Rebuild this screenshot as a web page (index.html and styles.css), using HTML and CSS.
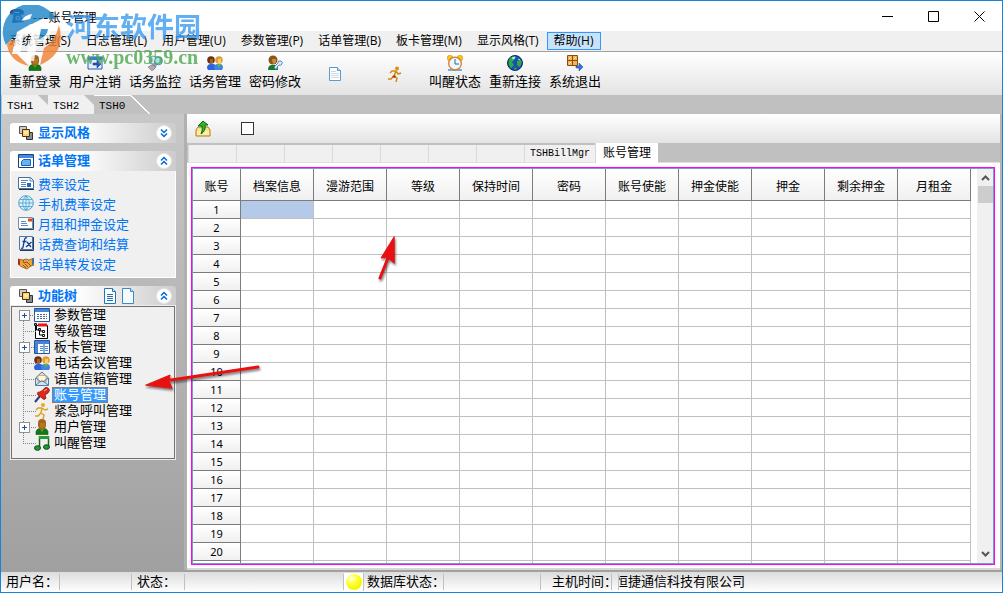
FILE: index.html
```html
<!DOCTYPE html>
<html lang="zh-CN">
<head>
<meta charset="UTF-8">
<meta name="viewport" content="width=device-width, initial-scale=1.0">
<title>账号管理</title>
<link rel="stylesheet" href="styles.css">
</head>
<body>

<!-- 图标 -->
<svg class="sprite" width="0" height="0" aria-hidden="true">
  <defs>
    <radialGradient id="ballFill" cx="35%" cy="30%" r="70%"><stop offset="0" stop-color="#fffff0"/><stop offset=".5" stop-color="#ffff30"/><stop offset="1" stop-color="#f4f400"/></radialGradient>
  </defs>
  <symbol id="i-user" viewBox="0 0 16 16"><path d="M2 15.500v-3q1-3 4-3h4q3 0 4 3v3z" fill="#137a13" stroke="#0a500a" stroke-width=".6"/><path d="M6 9l2 4 2-4z" fill="#50c040"/><path d="M4 4q0-4 4-4t4 4v3q-1 4-4 4T4 7z" fill="#a5661c"/><path d="M6 4h5v3q-1 2-3 2T6 7z" fill="#b8762c"/></symbol>
  <symbol id="i-users" viewBox="0 0 16 16"><path d="M0 13q0-4 4-4h2q3 0 3 4l-1 2H1z" fill="#2f62d8"/><circle cx="4" cy="5" r="3.800" fill="#6b3210"/><path d="M3 4h3v4H3z" fill="#a65c2c"/><path d="M7 13q0-4 4-4h2q3 0 3 4l-1 2H8z" fill="#3d82e8"/><path d="M10 9h4l-2 4z" fill="#5ab840"/><circle cx="12" cy="5" r="3.800" fill="#e0a030"/><path d="M11 4h3v4h-3z" fill="#f6cd70"/></symbol>
  <symbol id="i-logout" viewBox="0 0 16 16"><path d="M1 2h14v12H1z" fill="#e8f0ff" stroke="#2058b8"/><path d="M1 2h14v3H1z" fill="#3a78dc"/><path d="M6 8h4V5l4 4-4 4v-3H6z" fill="#1e58c8" stroke="#123b90" stroke-width=".6"/></symbol>
  <symbol id="i-monitor" viewBox="0 0 16 16"><path d="M3 11l7-6 2 2-5 8H4z" fill="#8a9cb4"/><circle cx="6" cy="5" r="4" fill="#cfe3f0" stroke="#6a9cc0"/><circle cx="11.500" cy="6" r="3.800" fill="#a6e1f2" stroke="#4c89ad"/><path d="M1 12l4-2 4 2-4 4z" fill="#b9a8b0" stroke="#777" stroke-width=".6"/></symbol>
  <symbol id="i-key" viewBox="0 0 16 16"><path d="M1 15q0-5 4-5h3q3 0 3 5z" fill="#167a24"/><circle cx="6" cy="5" r="4.500" fill="#8c5518"/><path d="M5 4h4v3q-1 2-3 2z" fill="#d08b3c"/><path d="M8 14l-1-2 4-4q0-3 3-2 2 1 1 3-1 2-3 1l-2 2v2z" fill="#d8ecff" stroke="#3d6fa8" stroke-width=".8"/></symbol>
  <symbol id="i-doc" viewBox="0 0 14 16"><path d="M1.500.500h8l3 3v12h-11z" fill="#f4faff" stroke="#3f87c4"/><path d="M9.500.500v3h3" fill="#cfe5f6" stroke="#3f87c4"/></symbol>
  <symbol id="i-doclines" viewBox="0 0 14 16"><path d="M1.500.500h8l3 3v12h-11z" fill="#fff" stroke="#1f78b8"/><path d="M9.500.500v3h3" fill="#cfe5f6" stroke="#1f78b8"/><path d="M4 6.500h6M4 8.500h6M4 10.500h6M4 12.500h6" stroke="#1f6cae"/></symbol>
  <symbol id="i-docpale" viewBox="0 0 14 16"><path d="M1.500 1.500h8l3 3v10h-11z" fill="#fff" stroke="#5a9ad0"/><path d="M9.500 1.500v3h3" fill="#cfe5f6" stroke="#5a9ad0"/><path d="M3 5.500h5M3 7.500h8M3 9.500h8M3 11.500h8" stroke="#cdd8e2"/></symbol>
  <symbol id="i-run" viewBox="0 0 16 16"><circle cx="10" cy="2.500" r="2" fill="#d89018"/><path d="M9 5L7 10l3 2-1 4M7 10l-3 3H1M9 5H5L3 7M9 5l2 3 3-1" fill="none" stroke="#d08a18" stroke-width="1.500"/><path d="M7 9l2 1-1 2-3-1z" fill="#c03018"/></symbol>
  <symbol id="i-runner" viewBox="0 0 16 16"><circle cx="9" cy="2" r="2" fill="#e8a820"/><path d="M8 5l-1 5 3 2-1 4M7 10l-3 3H1M8 5H4L2 7M8 5l3 2 3-1" fill="none" stroke="#e0a020" stroke-width="1.500"/></symbol>
  <symbol id="i-clock" viewBox="0 0 16 16"><circle cx="3" cy="3" r="2.800" fill="#f6c818" stroke="#c88510" stroke-width=".5"/><circle cx="13" cy="3" r="2.800" fill="#f6c818" stroke="#c88510" stroke-width=".5"/><path d="M1 15h14" stroke="#4898d0" stroke-width="1.500"/><circle cx="8" cy="8.500" r="6.300" fill="#eaf8ff" stroke="#e07820" stroke-width="1.300"/><path d="M8 4v5h4" fill="none" stroke="#286898"/></symbol>
  <symbol id="i-earth" viewBox="0 0 16 16"><circle cx="8" cy="8" r="7.500" fill="#1c4cb4" stroke="#102c68"/><path d="M3 3q4-3 6-1L7 5 5 7l2 3-3 3Q0 9 3 3M10 6l4-1q2 4-2 7l-2-2zM8 12l2 2-3 1z" fill="#28b038"/><path d="M5 3l3-1-1 2zM11 4l2 1" stroke="#a7e8ff" fill="#a7e8ff"/></symbol>
  <symbol id="i-exit" viewBox="0 0 16 16"><path d="M.5.500h5v5h-5zM5.500.500h5v5h-5zM.5 5.500h5v5h-5zM5.500 5.500h5v5h-5z" fill="#f5b455" stroke="#8f4811"/><path d="M2 4l2-2M7 4l2-2M2 9l2-2" stroke="#ffe5b0"/><path d="M9 11h3V8l4 4-4 4v-3H9z" fill="#3475d8" stroke="#174591" stroke-width=".5"/></symbol>
  <symbol id="i-stack" viewBox="0 0 16 16"><path d="M1.500 1.500h7v7h-7z" fill="#d0ccc0" stroke="#555"/><path d="M8.500 7.500h6v7h-6z" fill="#8090a0" stroke="#333"/><path d="M4.500 4.500h7v7h-7z" fill="#ffcf70" stroke="#493510"/><path d="M6 6h4v3H6z" fill="#ffe7ad"/></symbol>
  <symbol id="i-window" viewBox="0 0 16 16"><path d="M.5 1.500h15v13H.5z" fill="#fff" stroke="#153f86"/><path d="M1 2h14v3H1z" fill="#4a88e2"/><path d="M3.500 8.500l2-2h7v6h-9z" fill="#65b3f0" stroke="#1f61b2"/></symbol>
  <symbol id="i-form" viewBox="0 0 16 16"><path d="M.5 2.500h12l3 3v8H.5z" fill="#fff" stroke="#4b6f9c"/><path d="M12 2v4h4M3 5.500h7M3 7.500h5M3 9.500h5M3 11.500h5" fill="none" stroke="#5c82b3"/><path d="M9 8h4v4H9z" fill="#2368c8"/><path d="M1 14.500h15" stroke="#234"/></symbol>
  <symbol id="i-globe" viewBox="0 0 16 16"><circle cx="8" cy="8" r="7.300" fill="#d9f1fc" stroke="#55a3c8"/><path d="M1 8h14M2 4.500h12M2 11.500h12M8 .7v14.600M8 .7q-7 7.300 0 14.600M8 .7q7 7.300 0 14.600" fill="none" stroke="#58a8cf" stroke-width=".9"/></symbol>
  <symbol id="i-mail" viewBox="0 0 16 16"><path d="M.5 2.500h14v11H.5z" fill="#fff" stroke="#7290b2"/><path d="M3 6.500h5M3 8.500h6M3 10.500h7" stroke="#5d8bbb"/><path d="M10 3.500h4v3h-4z" fill="#d94723"/><path d="M1 14.500h14.500V3" fill="none" stroke="#294467"/></symbol>
  <symbol id="i-fx" viewBox="0 0 16 16"><path d="M1.500 1.500h13v13h-13z" fill="#edf4ff" stroke="#55759e"/><path d="M9 3Q7 2 6.500 5L5 12q0 2-2 1M4.500 6.500h4M9 7l4 5M13.500 7L8 12" fill="none" stroke="#173c84" stroke-width="1.300"/><path d="M2 15.500h13.500V2" fill="none" stroke="#223962"/></symbol>
  <symbol id="i-hands" viewBox="0 0 16 16"><path d="M0 4l5 1 3-1 3 1 5-2v7l-3 1-4 3-5-2-3-2-1-1z" fill="#eaa33f" stroke="#8f5713" stroke-width=".8"/><path d="M5 5l1 3 3-1 4 4M5 10l3 3M7 9l3 3" fill="none" stroke="#8f5713"/><path d="M0 4l2 1v5l-2-1z" fill="#b02b15"/><path d="M16 3l-2 1v6l2-1z" fill="#456c9e"/></symbol>
  <symbol id="i-grid" viewBox="0 0 16 16"><path d="M.5 1.500h15v13H.5z" fill="#fff" stroke="#23549e"/><path d="M1 2h14v3H1z" fill="#4384df"/><path d="M3 7.500h10M3 9.500h10M3 11.500h10" stroke="#4b6598" stroke-dasharray="2 1"/></symbol>
  <symbol id="i-level" viewBox="0 0 16 16"><path d="M1.500 2.500h12v13h-12z" fill="#fff" stroke="#000"/><path d="M4 .5h9v3H4z" fill="#f01414"/><path d="M2.500 3v4h3v5h4v2M5 8h4" fill="none" stroke="#000"/><path d="M.5.500h2v2h-2zM4.500 5.500h2v2h-2zM8.500 7.500h2v2h-2zM8.500 11.500h2v2h-2z" fill="#fff" stroke="#111"/><path d="M1 1h1v1H1zM5 6h1v1H5z" fill="#30c8b8"/></symbol>
  <symbol id="i-board" viewBox="0 0 16 16"><path d="M.5 1.500h15v13H.5z" fill="#fff" stroke="#23549e"/><path d="M1 2h14v3H1zM1 5h3v9H1z" fill="#4384df"/><path d="M6 7.500h3M6 9.500h3M6 11.500h3M11 7.500h3M11 9.500h3M11 11.500h3" stroke="#4384df"/><path d="M10 5v9" stroke="#23549e"/></symbol>
  <symbol id="i-openmail" viewBox="0 0 16 16"><path d="M1.500 7L8 1l6.500 6v7.500h-13z" fill="#cfe4f4" stroke="#537ba6"/><path d="M4 4.500h8v6H4z" fill="#fff5d8" stroke="#c59342" stroke-width=".7"/><path d="M2 14l5-4h2l5 4M2 7l5 4M14 7l-5 4" fill="none" stroke="#537ba6"/></symbol>
  <symbol id="i-pin" viewBox="0 0 16 16"><path d="M1 15l5-6" stroke="#2c3c7c" stroke-width="2"/><path d="M9 3q2-4 5-2 3 2 0 5l-3 2 1 3q-2 3-4 0L4 8Q2 5 6 5z" fill="#e02818" stroke="#8b130d" stroke-width=".8"/><path d="M10 4l3-2" stroke="#ffb0a0"/></symbol>
  <symbol id="i-music" viewBox="0 0 16 16"><path d="M5.500 13V2h9v10" fill="none" stroke="#146c20" stroke-width="1.500"/><path d="M5 1h10v3H5z" fill="#2c9838"/><ellipse cx="3.500" cy="13" rx="3" ry="2.300" fill="#239632" stroke="#0b5014"/><ellipse cx="12.500" cy="12" rx="3" ry="2.300" fill="#239632" stroke="#0b5014"/></symbol>
  <symbol id="i-up" viewBox="0 0 16 16"><path d="M1 9l2-3h10l2 3v6H1z" fill="#fce38b" stroke="#b67d0a"/><path d="M2 14h12V10H2z" fill="#ffefab"/><path d="M8 0l5 4h-3q1 6-4 9 2-4 1-8H3z" fill="#2db72d" stroke="#0c6b13"/></symbol>
  <symbol id="i-phone" viewBox="0 0 16 16"><path d="M1 6q-1-4 5-5 7-1 9 3l-1 3-3-1-1-2H6L4 7z" fill="#1e2566"/><path d="M5 5h6l4 9-12 1z" fill="#293882"/><circle cx="9" cy="10" r="2.600" fill="#c8ccec"/><circle cx="9" cy="10" r="1" fill="#293882"/></symbol>
  <symbol id="i-open" viewBox="0 0 16 16"><circle cx="8" cy="8" r="7.500" fill="#fff" stroke="#e4e4e4"/><path d="M5 7.500l3-3 3 3M5 11.500l3-3 3 3" fill="none" stroke="#0068d8" stroke-width="1.500"/></symbol>
  <symbol id="i-closed" viewBox="0 0 16 16"><circle cx="8" cy="8" r="7.500" fill="#fff" stroke="#e4e4e4"/><path d="M5 4.500l3 3 3-3M5 8.500l3 3 3-3" fill="none" stroke="#0068d8" stroke-width="1.500"/></symbol>
</svg>

<div class="window">
  <header class="titlebar">
    <svg class="icon"><use href="#i-phone"/></svg>
    <span class="caption">---账号管理</span>
    <div class="win-buttons">
      <button type="button" aria-label="最小化"><svg width="11" height="11"><path d="M0 5.500h11"/></svg></button>
      <button type="button" aria-label="最大化"><svg width="11" height="11"><path d="M.5.500h10v10H.5z"/></svg></button>
      <button type="button" aria-label="关闭"><svg width="11" height="11"><path d="M.5.500l10 10M10.500.500l-10 10"/></svg></button>
    </div>
  </header>

  <nav class="menubar">
    <button type="button">系统管理(S)</button>
    <button type="button">日志管理(L)</button>
    <button type="button">用户管理(U)</button>
    <button type="button">参数管理(P)</button>
    <button type="button">话单管理(B)</button>
    <button type="button">板卡管理(M)</button>
    <button type="button">显示风格(T)</button>
    <button type="button" class="hot">帮助(H)</button>
  </nav>

  <div class="toolbar">
    <button type="button"><svg class="icon"><use href="#i-user"/></svg>重新登录</button>
    <button type="button"><svg class="icon"><use href="#i-logout"/></svg>用户注销</button>
    <button type="button"><svg class="icon"><use href="#i-monitor"/></svg>话务监控</button>
    <button type="button"><svg class="icon"><use href="#i-users"/></svg>话务管理</button>
    <button type="button"><svg class="icon"><use href="#i-key"/></svg>密码修改</button>
    <button type="button" aria-label="文档"><svg class="icon"><use href="#i-docpale"/></svg></button>
    <button type="button" aria-label="紧急呼叫"><svg class="icon"><use href="#i-run"/></svg></button>
    <button type="button"><svg class="icon"><use href="#i-clock"/></svg>叫醒状态</button>
    <button type="button"><svg class="icon"><use href="#i-earth"/></svg>重新连接</button>
    <button type="button"><svg class="icon"><use href="#i-exit"/></svg>系统退出</button>
  </div>

  <div class="site-tabs">
    <button type="button">TSH1</button>
    <button type="button">TSH2</button>
    <button type="button" class="current">TSH0</button>
  </div>

  <div class="main">
    <aside class="sidebar">
      <section class="panel">
        <div class="panel-head">
          <svg class="icon"><use href="#i-stack"/></svg>
          <h2>显示风格</h2>
          <button type="button" aria-label="展开"><svg class="icon"><use href="#i-closed"/></svg></button>
        </div>
      </section>

      <section class="panel">
        <div class="panel-head">
          <svg class="icon"><use href="#i-window"/></svg>
          <h2>话单管理</h2>
          <button type="button" aria-label="收起"><svg class="icon"><use href="#i-open"/></svg></button>
        </div>
        <div class="links">
          <a href="#"><svg class="icon"><use href="#i-form"/></svg>费率设定</a>
          <a href="#"><svg class="icon"><use href="#i-globe"/></svg>手机费率设定</a>
          <a href="#"><svg class="icon"><use href="#i-mail"/></svg>月租和押金设定</a>
          <a href="#"><svg class="icon"><use href="#i-fx"/></svg>话费查询和结算</a>
          <a href="#"><svg class="icon"><use href="#i-hands"/></svg>话单转发设定</a>
        </div>
      </section>

      <section class="panel">
        <div class="panel-head">
          <svg class="icon"><use href="#i-stack"/></svg>
          <h2>功能树</h2>
          <div class="head-tools">
            <svg class="icon"><use href="#i-doclines"/></svg>
            <svg class="icon"><use href="#i-doc"/></svg>
          </div>
          <button type="button" aria-label="收起"><svg class="icon"><use href="#i-open"/></svg></button>
        </div>
        <ul class="tree">
          <li class="parent"><svg class="icon"><use href="#i-grid"/></svg><span>参数管理</span></li>
          <li><svg class="icon"><use href="#i-level"/></svg><span>等级管理</span></li>
          <li class="parent"><svg class="icon"><use href="#i-board"/></svg><span>板卡管理</span></li>
          <li><svg class="icon"><use href="#i-users"/></svg><span>电话会议管理</span></li>
          <li><svg class="icon"><use href="#i-openmail"/></svg><span>语音信箱管理</span></li>
          <li class="selected"><svg class="icon"><use href="#i-pin"/></svg><span>账号管理</span></li>
          <li><svg class="icon"><use href="#i-runner"/></svg><span>紧急呼叫管理</span></li>
          <li class="parent"><svg class="icon"><use href="#i-user"/></svg><span>用户管理</span></li>
          <li><svg class="icon"><use href="#i-music"/></svg><span>叫醒管理</span></li>
        </ul>
      </section>
    </aside>

    <div class="content">
      <div class="subbar">
        <button type="button" aria-label="上传"><svg class="icon"><use href="#i-up"/></svg></button>
        <input type="checkbox" aria-label="选择">
      </div>
      <div class="page-tabs">
        <i></i><i></i><i></i><i></i><i></i><i></i><i></i>
        <button type="button" class="mono">TSHBillMgr</button>
        <button type="button" class="current">账号管理</button>
      </div>
      <div class="page">
        <div class="grid">
          <div class="grid-view">
            <table>
              <thead>
                <tr><th>账号</th><th>档案信息</th><th>漫游范围</th><th>等级</th><th>保持时间</th><th>密码</th><th>账号使能</th><th>押金使能</th><th>押金</th><th>剩余押金</th><th>月租金</th></tr>
              </thead>
              <tbody id="rows"></tbody>
            </table>
          </div>
          <div class="scrollbar">
            <svg width="9" height="6"><path d="M1 5l3.500-3.500L8 5"/></svg>
            <div class="thumb"></div>
            <svg width="9" height="6"><path d="M1 1l3.500 3.500L8 1"/></svg>
          </div>
        </div>
      </div>
    </div>
  </div>

  <footer class="statusbar">
    <span class="s-user">用户名：</span>
    <span class="s-blank"></span>
    <span class="s-state">状态：</span>
    <span class="s-wide"></span>
    <span class="s-ball"><svg width="18" height="18"><circle cx="9" cy="9" r="8" fill="url(#ballFill)"/></svg></span>
    <span class="s-db">数据库状态：</span>
    <span class="s-dbval"></span>
    <span class="s-time">主机时间：</span>
    <span class="s-gap"></span>
    <span class="s-corp">恒捷通信科技有限公司</span>
  </footer>
</div>

<!-- 水印 -->
<div class="watermark">
  <svg width="64" height="64" viewBox="0 0 64 64">
    <path d="M4 40A28 28 0 0 1 54 14L42 13 28 20 20 31 12 32z" fill="#1c84c8"/>
    <path d="M5 40q2-6 13-5l-3 14 12 12Q8 57 5 40z" fill="#f08030"/>
    <path d="M57 20q8 28-19 40l4-17q11-6 15-23z" fill="#f08030"/>
    <path d="M15 27l14-8h20q4 1 1 7-5 11-15 13l-3 17h-9l7-29-8 4-4 18h-8z" fill="#fff"/>
    <path d="M39 24h7q-1 8-9 10z" fill="#1c84c8"/>
    <path d="M19 16q4-6 11-7l-2 5z" fill="#fff"/>
  </svg>
  <div>
    <p class="wm-name">河东软件园</p>
    <p class="wm-site">www.pc0359.cn</p>
  </div>
</div>

<!-- 指示箭头 -->
<svg class="arrow arrow-tree" width="120" height="32"><path d="M114 4L27 17" stroke-width="3"/><path d="M2 22l24-10-1 6 3 7z"/></svg>
<svg class="arrow arrow-grid" width="24" height="50"><path d="M4 44l8-20" stroke-width="3"/><path d="M18 3L5 24l6-1 7 6z"/></svg>

<script>
// 最后一行只露出一部分，不写行号
var html = '';
for (var i = 1; i <= 21; i++) {
  html += '<tr><th>' + (i <= 20 ? i : '') + '</th>';
  for (var j = 0; j < 10; j++) {
    html += (i === 1 && j === 0) ? '<td class="active"></td>' : '<td></td>';
  }
  html += '</tr>';
}
document.getElementById('rows').innerHTML = html;
</script>
</body>
</html>
```
FILE: styles.css
```css
* {
    box-sizing: border-box;
}
body {
    margin: 0;
    font-family: "Liberation Sans", "Noto Sans CJK SC", sans-serif;
    font-size: 13px;
    color: #000;
}
button {
    margin: 0;
    padding: 0;
    border: 0;
    background: none;
    font: inherit;
    color: inherit;
}
h2, p, ul {
    margin: 0;
    padding: 0;
}
.sprite {
    position: absolute;
}
.icon {
    display: block;
    flex: none;
    width: 16px;
    height: 16px;
}
.window {
    display: flex;
    flex-direction: column;
    height: 100vh;
    border: 1px solid #1883d7;
    background: #fff;
    overflow: hidden;
}

/* 标题栏 */
.titlebar {
    display: flex;
    align-items: center;
    flex: none;
    height: 30px;
    padding-left: 8px;
}
.caption {
    margin-left: 7px;
    font-family: "Inter", "Noto Sans CJK SC", sans-serif;
    font-size: 12px;
}
.win-buttons {
    display: flex;
    margin-left: auto;
}
.win-buttons button {
    display: flex;
    justify-content: center;
    align-items: center;
    width: 46px;
    height: 28px;
}
.win-buttons path {
    fill: none;
    stroke: #000;
}

/* 菜单 */
.menubar {
    display: flex;
    align-items: center;
    flex: none;
    height: 21px;
    gap: 1px;
    padding-left: 1px;
    background: #f0f0f0;
    border-bottom: 1px solid #a0a0a0;
    font-family: "Open Sans", "Noto Sans CJK SC", sans-serif;
    font-size: 12px;
}
.menubar button {
    height: 18px;
    padding: 0 6px;
    line-height: 16px;
    border: 1px solid transparent;
    white-space: nowrap;
}
.menubar .hot {
    border-color: #3399ff;
    background: #c8e2fc;
}

/* 工具栏 */
.toolbar {
    display: flex;
    flex: none;
    height: 43px;
    padding-left: 4px;
    background: linear-gradient(#fff, #e4e4e4);
}
.toolbar button {
    display: flex;
    flex-direction: column;
    align-items: center;
    justify-content: center;
    width: 60px;
    line-height: 22px;
    white-space: nowrap;
}

.site-tabs {
    display: flex;
    flex: none;
    height: 19px;
    padding-left: 1px;
    background: #c0c0c0;
    font-family: "Liberation Mono", monospace;
    font-size: 11px;
}
.site-tabs button {
    width: 46px;
    padding: 2px 0 0 5px;
    text-align: left;
    background: #f0f0f0;
    clip-path: polygon(0 0, 36px 0, 100% 10px, 100% 100%, 0 100%);
}
.site-tabs .current {
    width: 56px;
    background:
        linear-gradient(#fff, #fff) 0 0 / 36px 1px no-repeat,
        linear-gradient(to top right, #c0c0c0 47%, #fff 48% 52%, #c0c0c0 53%) right / 20px 19px no-repeat,
        #c0c0c0;
    clip-path: none;
}

.main {
    display: flex;
    flex: 1;
    min-height: 0;
}

/* 左侧 */
.sidebar {
    display: flex;
    flex-direction: column;
    flex: none;
    gap: 8px;
    width: 186px;
    padding: 9px 8px 0 9px;
    border-right: 3px solid #b0b0b0;
    background: linear-gradient(#c8c8c8, #a0a0a0);
}
.panel-head {
    display: flex;
    align-items: center;
    height: 20px;
    padding: 0 4px 0 8px;
    border-radius: 3px 3px 0 0;
    background: linear-gradient(90deg, #fff 40%, #ccc);
}
.panel-head h2 {
    margin-left: 4px;
    font-size: 13px;
    line-height: 20px;
    color: #0075f5;
}
.panel-head button {
    margin-left: auto;
}
.head-tools {
    display: flex;
    gap: 2px;
    margin-left: 25px;
}
.links {
    padding: 2px 7px 4px;
    border: 1px solid #fff;
    border-top: 0;
    background: #f0f0f0;
}
.links a {
    display: flex;
    align-items: center;
    gap: 4px;
    height: 20px;
    color: #0075f5;
    text-decoration: none;
    white-space: nowrap;
}
.tree {
    margin: 0 1px;
    padding-bottom: 7px;
    border: 1px solid #707070;
    outline: 1px solid #eee;
    background: #f0f0f0;
    list-style: none;
}
.tree li {
    position: relative;
    display: flex;
    align-items: center;
    height: 16px;
    padding-left: 22px;
    line-height: 16px;
}
.tree li::before {
    content: "";
    position: absolute;
    left: 11px;
    top: 0;
    width: 12px;
    height: 8px;
    border-left: 1px dotted #808080;
    border-bottom: 1px dotted #808080;
}
.tree li:not(:last-child) {
    background: repeating-linear-gradient(#808080 0 1px, transparent 1px 2px) 11px 0 / 1px 100% no-repeat;
}
.tree li:first-child {
    background-position-y: 8px;
}
.tree li:first-child::before {
    border-left: 0;
}
.tree li.parent::after {
    content: "";
    position: absolute;
    left: 7px;
    top: 3px;
    width: 9px;
    height: 9px;
    border: 1px solid #919191;
    background:
        linear-gradient(#2b4b9b, #2b4b9b) center / 5px 1px no-repeat,
        linear-gradient(#2b4b9b, #2b4b9b) center / 1px 5px no-repeat,
        #fff;
}
.tree span {
    margin-left: 2px;
    padding: 0 2px;
    white-space: nowrap;
}
.tree .selected span {
    background: #3399ff;
    color: #fff;
    outline: 1px dotted #c66a10;
    outline-offset: -1px;
}

/* 右侧 */
.content {
    display: flex;
    flex-direction: column;
    flex: 1;
    min-width: 0;
    border-right: 2px solid #b4b4b4;
}
.subbar {
    display: flex;
    align-items: center;
    flex: none;
    gap: 30px;
    height: 29px;
    padding-left: 8px;
    background: linear-gradient(#fff, #e4e4e4);
}
.subbar input {
    appearance: none;
    width: 13px;
    height: 13px;
    margin: 0;
    border: 1px solid #333;
    background: #fff;
}
.page-tabs {
    display: flex;
    flex: none;
    height: 20px;
    padding-left: 1px;
    background: #c0c0c0;
    border-bottom: 1px solid #e0e0e0;
}
.page-tabs i,
.page-tabs button {
    width: 48px;
    margin-top: 2px;
    border-left: 1px solid #d8d8d8;
    background: #f0f0f0;
}
.page-tabs button {
    width: 71px;
    line-height: 17px;
}
.page-tabs .mono {
    font-family: "Liberation Mono", monospace;
    font-size: 10px;
}
.page-tabs .current {
    width: 63px;
    margin: 0 0 -1px;
    background: #fff;
    font-size: 12px;
}
.page {
    display: flex;
    flex: 1;
    min-height: 0;
    padding: 4px 5px 3px 4px;
    border-bottom: 2px solid #d8d8d8;
}
.grid {
    display: flex;
    flex: 1;
    min-width: 0;
    border: 1px solid #f0f;
    box-shadow: inset 0 0 0 1px #7f9db9;
    padding: 1px;
    background: #fff;
}
.grid-view {
    flex: 1;
    min-width: 0;
    overflow: hidden;
}
.grid table {
    width: 778px;
    table-layout: fixed;
    border-collapse: separate;
    border-spacing: 0;
}
.grid th,
.grid td {
    width: 73px;
    height: 18px;
    padding: 0;
    border-right: 1px solid #c0c0c0;
    border-bottom: 1px solid #c0c0c0;
}
.grid th {
    border-color: #7c7c7c;
    background: linear-gradient(#fff, #f0f0f0);
    font-size: 12px;
    font-weight: normal;
    line-height: 16px;
}
.grid thead th {
    height: 32px;
    padding-top: 4px;
}
.grid th:first-child {
    width: 48px;
}
.grid tbody th {
    padding-top: 1px;
    font-family: "Noto Sans", sans-serif;
    font-size: 11px;
}
.grid .active {
    background: #b5c9e8;
}
.scrollbar {
    display: flex;
    flex-direction: column;
    align-items: center;
    flex: none;
    width: 16px;
    padding: 6px 0;
    background: #f0f0f0;
}
.scrollbar path {
    fill: none;
    stroke: #555;
    stroke-width: 2;
}
.thumb {
    width: 15px;
    height: 17px;
    margin: 5px 0 auto;
    background: #cdcdcd;
}

/* 状态栏 */
.statusbar {
    display: flex;
    align-items: center;
    flex: none;
    height: 22px;
    border-top: 2px solid #a0a0a0;
    background: linear-gradient(#dcdcdc, #fff);
    line-height: 16px;
}
.statusbar span {
    height: 16px;
    padding-left: 5px;
    border-right: 1px solid #c0c0c0;
    white-space: nowrap;
}
.statusbar .s-user {
    width: 59px;
}
.statusbar .s-blank {
    width: 72px;
}
.statusbar .s-state {
    width: 53px;
}
.statusbar .s-wide {
    width: 159px;
}
.statusbar .s-ball {
    display: flex;
    align-items: center;
    width: 20px;
    height: 18px;
    padding-left: 1px;
    background: #fff;
}
.statusbar .s-db {
    width: 80px;
    padding-left: 3px;
}
.statusbar .s-dbval {
    width: 97px;
}
.statusbar .s-time {
    width: 71px;
    padding-left: 11px;
}
.statusbar .s-gap {
    width: 7px;
}
.statusbar .s-corp {
    padding: 0;
    border: 0;
    overflow: hidden;
    text-indent: -4px;
}

/* 浮层 */
.watermark {
    position: absolute;
    left: 2px;
    top: 5px;
    display: flex;
    opacity: .8;
    pointer-events: none;
}
.wm-name {
    font-family: "Noto Sans CJK SC", sans-serif;
    font-size: 27px;
    font-weight: bold;
    line-height: 42px;
    color: #3b9cf0;
}
.wm-site {
    font-family: "Liberation Serif", serif;
    font-size: 20px;
    font-weight: bold;
    line-height: 20px;
    color: #4aa84a;
}
.arrow {
    position: absolute;
    pointer-events: none;
    fill: #e81010;
    stroke: #e81010;
    stroke-linecap: round;
    filter: drop-shadow(1px 2px 1px rgba(0, 0, 0, .5));
}
.arrow-tree {
    left: 144px;
    top: 363px;
}
.arrow-grid {
    left: 376px;
    top: 234px;
}
```
